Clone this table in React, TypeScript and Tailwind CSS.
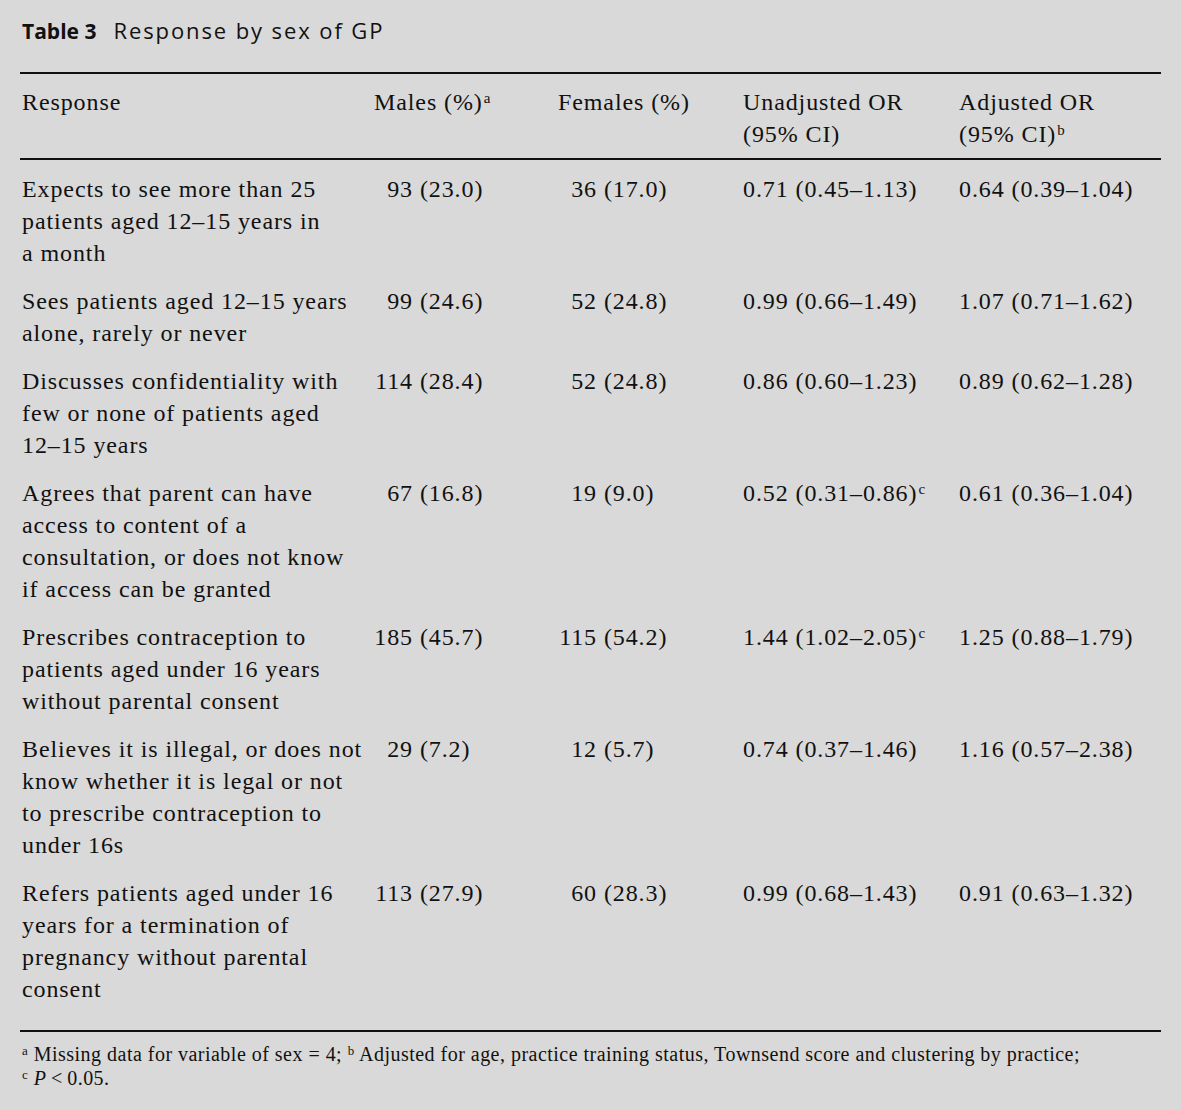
const rows = [
  {
    lines: ['Expects to see more than 25', 'patients aged 12–15 years in', 'a month'],
    m: ['93', '23.0'],
    f: ['36', '17.0'],
    u: '0.71 (0.45–1.13)',
    a: '0.64 (0.39–1.04)',
  },
  {
    lines: ['Sees patients aged 12–15 years', 'alone, rarely or never'],
    m: ['99', '24.6'],
    f: ['52', '24.8'],
    u: '0.99 (0.66–1.49)',
    a: '1.07 (0.71–1.62)',
  },
  {
    lines: ['Discusses confidentiality with', 'few or none of patients aged', '12–15 years'],
    m: ['114', '28.4'],
    f: ['52', '24.8'],
    u: '0.86 (0.60–1.23)',
    a: '0.89 (0.62–1.28)',
  },
  {
    lines: ['Agrees that parent can have', 'access to content of a', 'consultation, or does not know', 'if access can be granted'],
    m: ['67', '16.8'],
    f: ['19', '9.0'],
    u: '0.52 (0.31–0.86)',
    uSig: true,
    a: '0.61 (0.36–1.04)',
  },
  {
    lines: ['Prescribes contraception to', 'patients aged under 16 years', 'without parental consent'],
    m: ['185', '45.7'],
    f: ['115', '54.2'],
    u: '1.44 (1.02–2.05)',
    uSig: true,
    a: '1.25 (0.88–1.79)',
  },
  {
    lines: ['Believes it is illegal, or does not', 'know whether it is legal or not', 'to prescribe contraception to', 'under 16s'],
    m: ['29', '7.2'],
    f: ['12', '5.7'],
    u: '0.74 (0.37–1.46)',
    a: '1.16 (0.57–2.38)',
  },
  {
    lines: ['Refers patients aged under 16', 'years for a termination of', 'pregnancy without parental', 'consent'],
    m: ['113', '27.9'],
    f: ['60', '28.3'],
    u: '0.99 (0.68–1.43)',
    a: '0.91 (0.63–1.32)',
  },
]

const serif = { fontFamily: '"Liberation Serif", "Times New Roman", serif' }

function Count({ n, pct }: { n: string; pct: string }) {
  return (
    <span className="whitespace-nowrap">
      <span className="inline-block w-[39px] text-right">{n}</span> ({pct})
    </span>
  )
}

export default function App() {
  return (
    <div className="min-h-[1110px] w-[1181px] bg-[#d9d9d9] text-[#111] pt-[14px]">
      <h1
        className="pl-[22px] text-[21px] leading-[32px] text-[#111]"
        style={{ fontFamily: '"Open Sans", "Noto Sans", sans-serif' }}
      >
        <span className="font-bold">Table 3</span>
        <span className="ml-[17px] text-[22px] tracking-[1.9px]">Response by sex of GP</span>
      </h1>

      <div className="mx-[20px] mt-[25px] border-t-2 border-[#111]" />

      <div className="text-[24px] leading-[32px] tracking-[0.9px]" style={serif}>
        <div className="grid grid-cols-[352px_184px_185px_216px_1fr] pl-[22px] pt-[12px] pb-[8px]">
          <div>Response</div>
          <div>
            Males (%)<sup className="text-[15px] ml-[1px]">a</sup>
          </div>
          <div>Females (%)</div>
          <div>
            Unadjusted OR
            <br />
            (95% CI)
          </div>
          <div>
            Adjusted OR
            <br />
            (95% CI)<sup className="text-[15px] ml-[1px]">b</sup>
          </div>
        </div>

        <div className="mx-[20px] border-t-2 border-[#111]" />

        <div className="pt-[13px] pb-[25px] flex flex-col gap-4">
          {rows.map((r, i) => (
            <div key={i} className="grid grid-cols-[352px_184px_185px_216px_1fr] pl-[22px]">
              <div>
                {r.lines.map((l, j) => (
                  <div key={j} className="whitespace-nowrap">
                    {l}
                  </div>
                ))}
              </div>
              <div>
                <Count n={r.m[0]} pct={r.m[1]} />
              </div>
              <div>
                <Count n={r.f[0]} pct={r.f[1]} />
              </div>
              <div className="whitespace-nowrap">
                {r.u}
                {r.uSig && <sup className="text-[15px] ml-[1px]">c</sup>}
              </div>
              <div className="whitespace-nowrap">{r.a}</div>
            </div>
          ))}
        </div>

        <div className="mx-[20px] border-t-2 border-[#111]" />

        <div className="pl-[22px] pt-[10px] text-[20px] leading-[24px] tracking-[0.48px]">
          <p>
            <sup className="text-[13px]">a</sup> Missing data for variable of sex = 4; <sup className="text-[13px]">b</sup> Adjusted
            for age, practice training status, Townsend score and clustering by practice;
          </p>
          <p>
            <sup className="text-[13px]">c</sup> <span className="italic">P</span>&thinsp;&lt;&thinsp;0.05.
          </p>
        </div>
      </div>
    </div>
  )
}
